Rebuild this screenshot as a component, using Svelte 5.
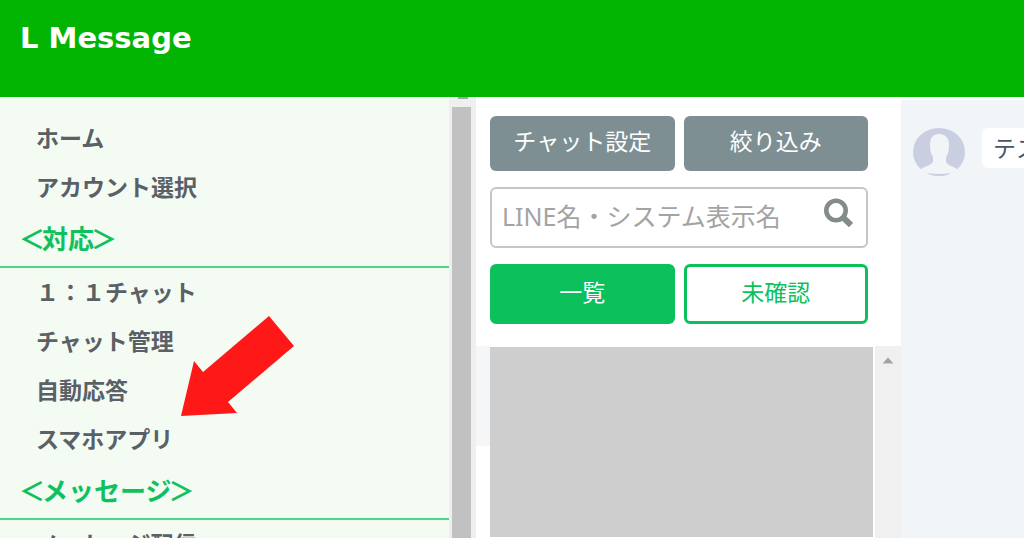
<script>
  const topItems = ['ホーム', 'アカウント選択'];
  const groups = [
    { title: '対応', items: ['１：１チャット', 'チャット管理', '自動応答', 'スマホアプリ'] },
    { title: 'メッセージ', items: ['メッセージ配信'] },
  ];

  let keyword = $state('');
  let tab = $state('all');
</script>

<div class="app">
  <header>
    <h1>L Message</h1>
  </header>

  <div class="body">
    <nav class="sidebar">
      <div class="menu">
        {#each topItems as item}
          <a class="item" href="#top">{item}</a>
        {/each}
        {#each groups as group}
          <h2><span class="angle">＜</span>{group.title}<span class="angle">＞</span></h2>
          {#each group.items as item}
            <a class="item" href="#menu">{item}</a>
          {/each}
        {/each}
      </div>
      <div class="track">
        <div class="arrow-stub"></div>
        <div class="thumb"></div>
      </div>
    </nav>

    <section class="panel">
      <div class="controls">
        <div class="row">
          <button class="btn gray">チャット設定</button>
          <button class="btn gray">絞り込み</button>
        </div>
        <div class="search">
          <input
            type="text"
            bind:value={keyword}
            placeholder="LINE名・システム表示名"
            aria-label="LINE名・システム表示名"
          />
          <button class="search-btn" aria-label="検索">
            <svg width="30" height="30" viewBox="0 0 30 30" fill="none" stroke="#848b8b">
              <circle cx="13" cy="12.500" r="9.700" stroke-width="4.600" />
              <path d="M19.500 19 L28 27" stroke-width="6" />
            </svg>
          </button>
        </div>
        <div class="row">
          <button class="btn tab" class:active={tab === 'all'} onclick={() => (tab = 'all')}>一覧</button>
          <button class="btn tab" class:active={tab === 'unread'} onclick={() => (tab = 'unread')}>未確認</button>
        </div>
      </div>
      <div class="list">
        <div class="gutter"></div>
        <div class="cover"></div>
        <div class="list-track">
          <svg width="12" height="7" viewBox="0 0 12 7"><path d="M6 0.500 L11.500 6.500 H0.500 Z" fill="#a3a3a3" /></svg>
        </div>
      </div>
    </section>

    <main class="chat">
      <svg class="avatar" width="52" height="48" viewBox="0 0 52 48">
        <ellipse cx="26" cy="24" rx="26" ry="24" fill="#c9cfe1" />
        <path
          d="M26 6 C20 6 17 10 17 16 C17 23 18 26 20 29 V33 C20 37 12 38 8 41 L3 44 V46 H49 V44 L44 41 C40 38 33 37 33 33 V29 C35 26 36 23 36 16 C36 10 32 6 26 6 Z"
          fill="#f1f5f7"
        />
        <path d="M14 45 Q26 47 38 45 Q33 48 26 48 Q19 48 14 45 Z" fill="#c9cfe1" />
      </svg>
      <p class="bubble">テス</p>
    </main>
  </div>

  <svg class="pointer" width="114" height="101" viewBox="0 0 114 101">
    <polygon points="88,0 113,30 47,86 56,97 0,100 13,45 22,56" fill="#ff1818" />
  </svg>
</div>

<style>
  :global(body) {
    margin: 0;
  }

  .app {
    position: relative;
    display: flex;
    flex-direction: column;
    height: 100vh;
    overflow: hidden;
    background: #fff;
    font-family: 'Noto Sans', 'Noto Sans CJK JP', sans-serif;
    font-size: 23px;
  }

  header {
    flex: none;
    padding: 20px 20px 41px;
    background: #02b503;
  }

  h1 {
    margin: 0;
    color: #fff;
    font: bold 29px/36px 'DejaVu Sans', sans-serif;
  }

  .body {
    flex: 1;
    display: flex;
    min-height: 0;
  }

  .sidebar {
    flex: none;
    display: flex;
    width: 476px;
    overflow: hidden;
    background: #f3fbf3;
  }

  .menu {
    flex: 1;
    padding-top: 17px;
  }

  .item {
    display: block;
    padding: 0 0 3px 36px;
    color: #5a6066;
    font-family: 'Noto Sans CJK JP', sans-serif;
    font-weight: bold;
    line-height: 46px;
    text-decoration: none;
  }

  h2 {
    margin: 0;
    padding: 0 0 3px 22px;
    border-bottom: 2px solid #4dd589;
    color: #0fc15d;
    font: bold 26px/51px 'Noto Sans CJK JP', sans-serif;
  }

  .angle {
    margin: 0 -3px;
  }

  .track {
    display: flex;
    flex-direction: column;
    align-items: center;
    width: 27px;
    background: #efefef;
  }

  .arrow-stub {
    width: 10px;
    height: 2px;
    margin-bottom: 8px;
    background: #a3a3a3;
  }

  .thumb {
    flex: 1;
    width: 19px;
    margin-right: 3px;
    background: #c1c1c1;
  }

  .panel {
    flex: none;
    display: flex;
    flex-direction: column;
    width: 425px;
  }

  .controls {
    display: flex;
    flex-direction: column;
    gap: 16px;
    padding: 19px 33px 22px 14px;
  }

  .row {
    display: flex;
    gap: 9px;
  }

  .btn {
    flex: 1;
    padding: 7px 0 13px;
    border: none;
    border-radius: 6px;
    color: #fff;
    font-family: 'Noto Sans CJK JP', sans-serif;
    font-size: 23px;
    line-height: 35px;
  }

  .gray {
    background: #7d8f93;
  }

  .tab {
    padding: 7px 0 12px;
    border: 3px solid #0cc15c;
    background: #fff;
    color: #0cc15c;
  }

  .tab.active {
    background: #0cc15c;
    color: #fff;
  }

  .search {
    display: flex;
    align-items: flex-start;
    border: 2px solid #c6c6c6;
    border-radius: 6px;
  }

  .search input {
    flex: 1;
    min-width: 0;
    padding: 9px 0 12px 10px;
    border: none;
    outline: none;
    background: none;
    color: #555;
    font-family: 'Noto Sans', 'Noto Sans CJK JP', sans-serif;
    font-size: 25px;
    line-height: 36px;
  }

  .search input::placeholder {
    color: #a3a3a3;
    opacity: 1;
  }

  .search-btn {
    display: flex;
    padding: 9px 13px 0 0;
    border: none;
    background: none;
  }

  .list {
    flex: 1;
    display: flex;
  }

  .gutter {
    width: 14px;
    height: 100px;
    background: #f4f6f8;
  }

  .cover {
    flex: 1;
    margin: 1px 2px 1px 0;
    background: #cecece;
  }

  .list-track {
    display: flex;
    justify-content: center;
    width: 26px;
    padding-top: 11px;
    background: #f0f0f0;
  }

  .chat {
    flex: 1;
    display: flex;
    align-items: flex-start;
    gap: 17px;
    min-width: 0;
    margin-top: 3px;
    padding: 28px 0 0 12px;
    overflow: hidden;
    background: #f1f5f7;
  }

  .avatar {
    flex: none;
  }

  .bubble {
    flex: none;
    margin: 0;
    padding: 0 11px;
    border-radius: 6px;
    background: #fff;
    color: #4a5568;
    line-height: 40px;
  }

  /* callout arrow laid over the menu */
  .pointer {
    position: absolute;
    top: 316px;
    left: 181px;
  }
</style>
